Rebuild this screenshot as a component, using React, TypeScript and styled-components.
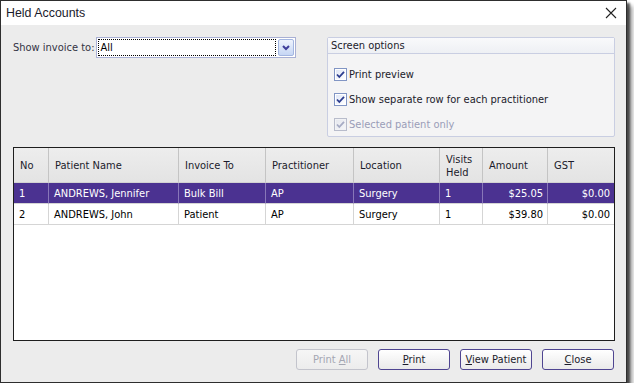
import React from 'react';
import styled, { createGlobalStyle } from 'styled-components';

const GlobalStyle = createGlobalStyle`
  html, body {
    margin: 0;
    padding: 0;
    background: #ffffff;
  }
  body {
    font-family: "DejaVu Sans Condensed", "Liberation Sans", sans-serif;
    font-size: 11px;
    color: #000;
  }
`;

const Window = styled.div`
  box-sizing: border-box;
  width: 627px;
  height: 383px;
  border: 1px solid #2e2e2e;
  background: #ececec;
  display: flex;
  flex-direction: column;
  box-shadow: 3px 3px 2px rgba(0, 0, 0, 0.6), 6px 6px 4px rgba(0, 0, 0, 0.3);
`;

const TitleBar = styled.div`
  height: 24px;
  background: #ffffff;
  display: flex;
  align-items: center;
  justify-content: space-between;
  padding: 0 9px 0 5px;
`;

const Title = styled.span`
  font-family: "Liberation Sans", sans-serif;
  font-size: 12.4px;
  color: #1b1b2b;
`;

const CloseX = styled.svg`
  width: 12px;
  height: 12px;
`;

const Body = styled.div`
  flex: 1;
  display: flex;
  flex-direction: column;
  padding: 12px 11px 12px 12px;
`;

const TopSection = styled.div`
  display: flex;
  justify-content: space-between;
  height: 100px;
  margin-bottom: 10px;
`;

const InvoiceRow = styled.div`
  display: flex;
  align-items: flex-start;
  gap: 2px;
`;

const Label = styled.span`
  color: #333344;
  line-height: 21px;
`;

const Combo = styled.div`
  box-sizing: border-box;
  width: 200px;
  height: 21px;
  border: 1px solid #a9b0d4;
  background: #fff;
  display: flex;
  align-items: center;
  padding: 1px;
  gap: 2px;
`;

const ComboText = styled.div`
  flex: 1;
  height: 100%;
  box-sizing: border-box;
  border: 1px dotted #000;
  padding-left: 1px;
  line-height: 15px;
`;

const ComboButton = styled.div`
  box-sizing: border-box;
  width: 16px;
  height: 17px;
  border: 1px solid #a3b6e0;
  border-radius: 2px;
  background: linear-gradient(#eef3fd, #c6d6f4);
  display: flex;
  align-items: center;
  justify-content: center;
`;

const Group = styled.div`
  box-sizing: border-box;
  width: 288px;
  height: 100px;
  border: 1px solid #c9cee2;
  border-radius: 2px;
  background: #f4f4f5;
  display: flex;
  flex-direction: column;
`;

const GroupHeader = styled.div`
  height: 15px;
  line-height: 15px;
  padding-left: 3px;
  background: linear-gradient(#f9f9fb, #eef0f4);
  border-bottom: 1px solid #c9cee2;
  color: #1b1b2b;
`;

const GroupBody = styled.div`
  display: flex;
  flex-direction: column;
  padding: 12px 0 0 6px;
  gap: 9px;
`;

const CheckRow = styled.label<{ disabled?: boolean }>`
  display: flex;
  align-items: center;
  gap: 2px;
  height: 16px;
  color: ${p => (p.disabled ? '#9a9db8' : '#1b1b2b')};
`;

const Grid = styled.div`
  flex: 1;
  box-sizing: border-box;
  border: 1px solid #1e1e1e;
  background: #fff;
  display: flex;
  flex-direction: column;
  margin-bottom: 8px;
`;

const Row = styled.div<{ selected?: boolean }>`
  display: flex;
  height: 21px;
  background: ${p => (p.selected ? '#4b3291' : '#ffffff')};
  color: ${p => (p.selected ? '#ffffff' : '#000000')};
`;

const HeaderRow = styled.div`
  display: flex;
  height: 35px;
  background: linear-gradient(#ededed, #e3e3e3);
`;

const HeadCell = styled.div<{ w: number }>`
  box-sizing: border-box;
  width: ${p => p.w}px;
  border-right: 1px solid #c4c4c4;
  border-bottom: 1px solid #d2d2d2;
  padding: 1px 0 0 6px;
  display: flex;
  align-items: center;
  line-height: 13px;
  color: #1b1b2b;
  &:last-child { flex: 1; border-right: none; }
`;

const Cell = styled.div<{ w: number; right?: boolean; sel?: boolean }>`
  box-sizing: border-box;
  width: ${p => p.w}px;
  border-right: 1px solid ${p => (p.sel ? '#8877b8' : '#d5d5d5')};
  border-bottom: 1px solid #d5d5d5;
  padding: 1px 4px 0 5px;
  display: flex;
  align-items: center;
  justify-content: ${p => (p.right ? 'flex-end' : 'flex-start')};
  white-space: nowrap;
  &:last-child { flex: 1; border-right: none; }
`;

const ButtonBar = styled.div`
  display: flex;
  justify-content: flex-end;
  gap: 10px;
  padding-right: 1px;
`;

const Button = styled.button`
  box-sizing: border-box;
  width: 72px;
  height: 21px;
  border: 1px solid #4f4591;
  border-radius: 3px;
  background: linear-gradient(#ffffff, #eaeaea);
  font-family: inherit;
  font-size: 11px;
  color: #1b1b2b;
  padding: 0;
  &:disabled {
    border-color: #c3c4cc;
    color: #a4a6b2;
    background: linear-gradient(#f6f6f6, #ececec);
  }
  u { text-decoration: underline; }
`;

const CheckBox: React.FC<{ disabled?: boolean }> = ({ disabled }) => (
  <svg width="13" height="13" viewBox="0 0 13 13">
    <defs>
      <linearGradient id={disabled ? 'cbd' : 'cb'} x1="0" y1="0" x2="1" y2="1">
        <stop offset="0" stopColor={disabled ? '#e6e8ee' : '#dfe6f6'} />
        <stop offset="1" stopColor={disabled ? '#f4f5f8' : '#ffffff'} />
      </linearGradient>
    </defs>
    <rect x="0.5" y="0.5" width="12" height="12" fill={disabled ? '#f1f2f5' : '#fff'} stroke={disabled ? '#b8bccb' : '#8195c4'} />
    <rect x="2" y="2" width="9" height="9" fill={`url(#${disabled ? 'cbd' : 'cb'})`} />
    <path d="M3 6.5 L5.3 9 L10 3.8" fill="none" stroke={disabled ? '#a6abc4' : '#2c3d8f'} strokeWidth="1.8" />
  </svg>
);

const cols = [35, 130, 87, 88, 86, 43, 65, 65];

const rows = [
  { no: '1', name: 'ANDREWS, Jennifer', to: 'Bulk Bill', pr: 'AP', loc: 'Surgery', visits: '1', amt: '$25.05', gst: '$0.00' },
  { no: '2', name: 'ANDREWS, John', to: 'Patient', pr: 'AP', loc: 'Surgery', visits: '1', amt: '$39.80', gst: '$0.00' },
];

export default function App() {
  return (
    <>
      <GlobalStyle />
      <Window>
        <TitleBar>
          <Title>Held Accounts</Title>
          <CloseX viewBox="0 0 12 12">
            <path d="M1 1 L11 11 M11 1 L1 11" stroke="#222" strokeWidth="1.1" />
          </CloseX>
        </TitleBar>
        <Body>
          <TopSection>
            <InvoiceRow>
              <Label>Show invoice to:</Label>
              <Combo>
                <ComboText>All</ComboText>
                <ComboButton>
                  <svg width="8" height="6" viewBox="0 0 8 6">
                    <path d="M1 1 L4 4 L7 1" fill="none" stroke="#3f3d9a" strokeWidth="2" />
                  </svg>
                </ComboButton>
              </Combo>
            </InvoiceRow>
            <Group>
              <GroupHeader>Screen options</GroupHeader>
              <GroupBody>
                <CheckRow><CheckBox />Print preview</CheckRow>
                <CheckRow><CheckBox />Show separate row for each practitioner</CheckRow>
                <CheckRow disabled><CheckBox disabled />Selected patient only</CheckRow>
              </GroupBody>
            </Group>
          </TopSection>

          <Grid>
            <HeaderRow>
              <HeadCell w={cols[0]}>No</HeadCell>
              <HeadCell w={cols[1]}>Patient Name</HeadCell>
              <HeadCell w={cols[2]}>Invoice To</HeadCell>
              <HeadCell w={cols[3]}>Practitioner</HeadCell>
              <HeadCell w={cols[4]}>Location</HeadCell>
              <HeadCell w={cols[5]}>Visits<br />Held</HeadCell>
              <HeadCell w={cols[6]}>Amount</HeadCell>
              <HeadCell w={cols[7]}>GST</HeadCell>
            </HeaderRow>
            {rows.map((r, i) => {
              const sel = i === 0;
              return (
                <Row key={r.no} selected={sel}>
                  <Cell w={cols[0]} sel={sel}>{r.no}</Cell>
                  <Cell w={cols[1]} sel={sel}>{r.name}</Cell>
                  <Cell w={cols[2]} sel={sel}>{r.to}</Cell>
                  <Cell w={cols[3]} sel={sel}>{r.pr}</Cell>
                  <Cell w={cols[4]} sel={sel}>{r.loc}</Cell>
                  <Cell w={cols[5]} sel={sel}>{r.visits}</Cell>
                  <Cell w={cols[6]} sel={sel} right>{r.amt}</Cell>
                  <Cell w={cols[7]} sel={sel} right>{r.gst}</Cell>
                </Row>
              );
            })}
          </Grid>

          <ButtonBar>
            <Button disabled>Print <u>A</u>ll</Button>
            <Button><u>P</u>rint</Button>
            <Button><u>V</u>iew Patient</Button>
            <Button><u>C</u>lose</Button>
          </ButtonBar>
        </Body>
      </Window>
    </>
  );
}
